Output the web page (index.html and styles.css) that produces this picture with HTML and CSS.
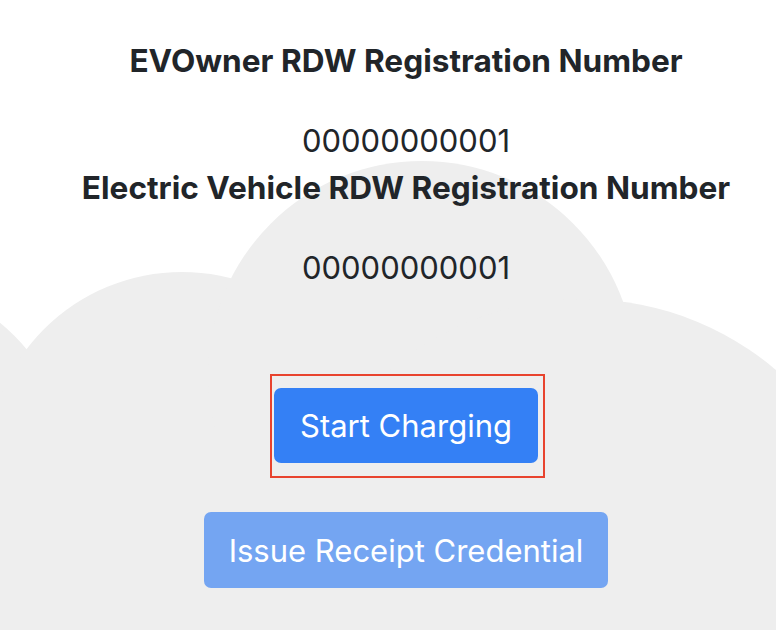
FILE: index.html
```html
<!DOCTYPE html>
<html lang="en">
<head>
<meta charset="utf-8">
<title>Charging</title>
<link rel="stylesheet" href="styles.css">
</head>
<body>
<svg class="cloud" width="776" height="630" viewBox="0 0 776 630" aria-hidden="true">
  <circle cx="-120" cy="470" r="190"/>
  <circle cx="182" cy="467" r="195"/>
  <circle cx="422" cy="375" r="214"/>
  <circle cx="583" cy="597" r="298"/>
  <rect x="0" y="440" width="776" height="190"/>
</svg>
<main class="content">
  <h2 class="label">EVOwner RDW Registration Number</h2>
  <p class="value">00000000001</p>
  <h2 class="label">Electric Vehicle RDW Registration Number</h2>
  <p class="value value-last">00000000001</p>
  <div class="focus-frame">
    <button class="btn btn-primary" type="button">Start Charging</button>
  </div>
  <button class="btn btn-disabled" type="button" disabled>Issue Receipt Credential</button>
</main>
</body>
</html>
```
FILE: styles.css
```css
html, body {
  margin: 0;
  padding: 0;
  background: #ffffff;
}
body {
  width: 776px;
  height: 630px;
  overflow: hidden;
  position: relative;
  font-family: Inter, "Noto Sans", sans-serif;
  color: #212529;
}
.cloud {
  position: absolute;
  left: 0;
  top: 0;
  fill: #eeeeee;
  z-index: 0;
}
.content {
  position: relative;
  z-index: 1;
  display: flex;
  flex-direction: column;
  align-items: center;
  padding: 44px 0 0 36px;
}
.label {
  margin: 0;
  font-size: 31.6px;
  line-height: 34px;
  font-weight: 700;
  white-space: nowrap;
}
.value {
  margin: 46px 0 13px;
  font-size: 31px;
  line-height: 34px;
  font-weight: 400;
}
.value-last {
  margin-bottom: 89px;
}
.focus-frame {
  border: 2px solid #e8432e;
  padding: 12px 5px 13px 2px;
  margin-left: 3px;
  display: flex;
}
.btn {
  font-family: Inter, "Noto Sans", sans-serif;
  font-size: 31px;
  color: #ffffff;
  border: none;
  border-radius: 7px;
  height: 75px;
  padding: 0;
}
.btn-primary {
  background: #3480f5;
  width: 264px;
}
.btn-disabled {
  background: #74a5f2;
  width: 404px;
  height: 76px;
  margin-top: 34px;
}
```
